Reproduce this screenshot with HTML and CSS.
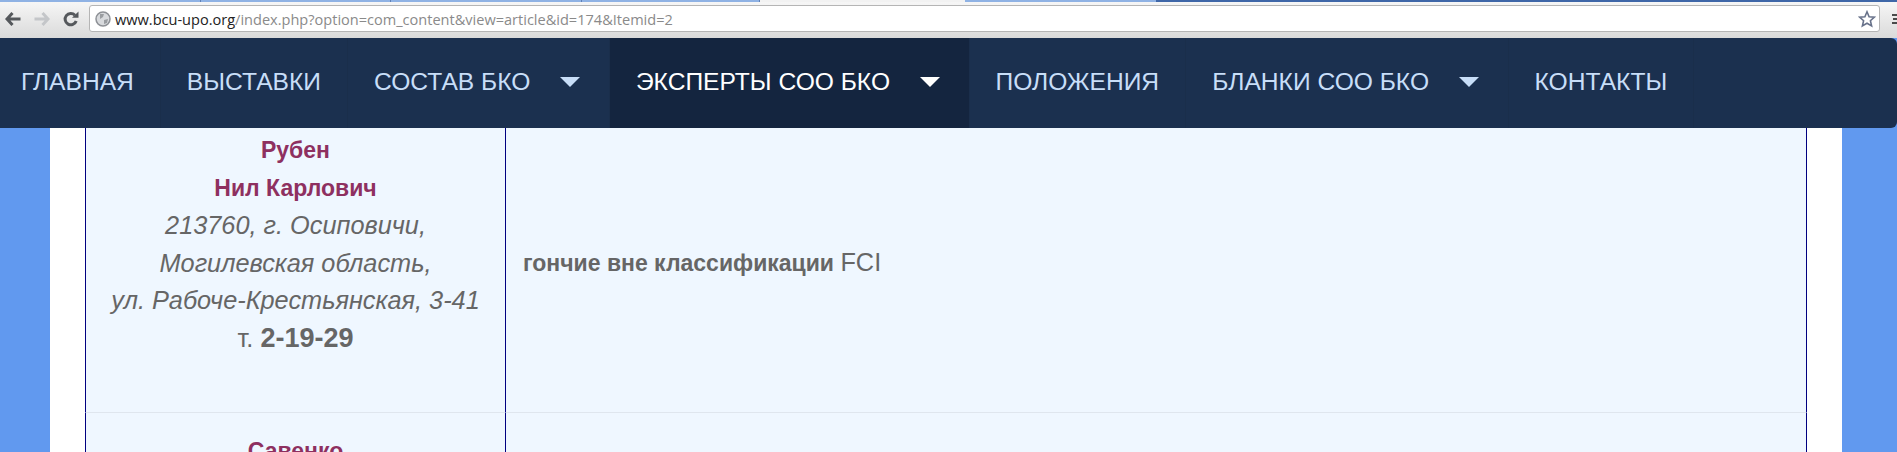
FILE: index.html
```html
<!DOCTYPE html>
<html lang="en">
<head>
  <meta charset="UTF-8">
  <title>БКО</title>
  <link rel="stylesheet" href="styles.css">
</head>
<body>
  <div class="tab-strip">
    <div class="tab tab-a"></div>
    <div class="tab tab-b"></div>
    <div class="tab tab-c"></div>
    <div class="tab tab-d"></div>
    <div class="tab tab-e"></div>
    <div class="tab tab-f"></div>
  </div>
  <div class="toolbar">
    <svg class="tool-icon" width="16" height="14" viewBox="0 0 16 14"><path d="M7.5 1 L2 7 L7.5 13 M3 7 H15.5" fill="none" stroke="#55585c" stroke-width="3"/></svg>
    <svg class="tool-icon" width="16" height="14" viewBox="0 0 16 14"><path d="M8.5 1 L14 7 L8.5 13 M13 7 H0.5" fill="none" stroke="#c4c6c9" stroke-width="3"/></svg>
    <svg class="tool-icon" width="16" height="16" viewBox="0 0 16 16"><path d="M13.2 10 A5.7 5.7 0 1 1 12 4.2" fill="none" stroke="#55585c" stroke-width="3"/><path d="M9 6.8 H15.5 V0.5 Z" fill="#55585c"/></svg>
    <div class="address">
      <svg class="globe" width="16" height="16" viewBox="0 0 16 16"><circle cx="8" cy="8" r="7" fill="#d8dadd" stroke="#8e9196" stroke-width="1.5"/><path d="M5 3 L9 3 L8 6 L5 8 Z M9 9 L13 8 L12 12 L9 13 Z" fill="#9a9da1"/></svg>
      <span class="url"><span class="host">www.bcu-upo.org</span>/index.php?option=com_content&amp;view=article&amp;id=174&amp;Itemid=2</span>
      <svg class="star" width="18" height="18" viewBox="0 0 18 18"><path d="M9 1.8 L11.1 6.7 L16.4 7.2 L12.4 10.7 L13.6 15.9 L9 13.2 L4.4 15.9 L5.6 10.7 L1.6 7.2 L6.9 6.7 Z" fill="#fff" stroke="#68728a" stroke-width="1.6"/></svg>
    </div>
    <svg class="menu-edge" width="5" height="10" viewBox="0 0 5 10"><path d="M0 1 H5 M1 5 H5 M0 9 H5" stroke="#4a4a4a" stroke-width="2"/></svg>
  </div>

  <nav class="nav">
    <a class="nav-item first">ГЛАВНАЯ</a>
    <a class="nav-item">ВЫСТАВКИ</a>
    <a class="nav-item has-sub">СОСТАВ БКО</a>
    <a class="nav-item has-sub active">ЭКСПЕРТЫ СОО БКО</a>
    <a class="nav-item">ПОЛОЖЕНИЯ</a>
    <a class="nav-item has-sub">БЛАНКИ СОО БКО</a>
    <a class="nav-item">КОНТАКТЫ</a>
  </nav>

  <div class="page">
    <table class="experts">
      <tr>
        <td class="person">
          <div class="name">Рубен</div>
          <div class="name">Нил Карлович</div>
          <div class="addr">213760, г. Осиповичи,</div>
          <div class="addr">Могилевская область,</div>
          <div class="addr">ул. Рабоче-Крестьянская, 3-41</div>
          <div class="phone">т. <b>2-19-29</b></div>
        </td>
        <td class="breeds"><b>гончие вне классификации</b> <span class="fci">FCI</span></td>
      </tr>
      <tr>
        <td class="person next">
          <div class="name">Савенко</div>
        </td>
        <td class="breeds"></td>
      </tr>
    </table>
  </div>
</body>
</html>
```

FILE: styles.css
```css
* {
  margin: 0;
  padding: 0;
  box-sizing: border-box;
}

html, body {
  height: 452px;
  overflow: hidden;
}

body {
  background: #6199ef;
  font-family: "Liberation Sans", Arial, sans-serif;
}

.tab-strip {
  height: 2px;
  display: flex;
  background: #f2f2f2;
}

.tab {
  background: #8fb2e4;
  border-right: 1px solid #5f80b5;
}

.tab-a { width: 201px; }
.tab-b { width: 190px; }
.tab-c { width: 191px; }
.tab-d { width: 178px; margin-right: 205px; }
.tab-e { width: 191px; border: 0; }
.tab-f { flex: 1; background: #3f67a8; border: 0; }

.toolbar {
  height: 36px;
  display: flex;
  align-items: center;
  padding: 0 0 3px 5px;
  background: linear-gradient(#f6f6f6, #dadada);
}

.tool-icon {
  margin-right: 13px;
  flex: none;
}

.address {
  width: 1791px;
  height: 27px;
  margin-left: -3px;
  display: flex;
  align-items: center;
  padding: 0 3px 0 5px;
  background: #fff;
  border: 1px solid #b5b5b5;
  border-radius: 3px;
}

.globe {
  margin-right: 4px;
}

.url {
  flex: 1;
  font-family: "Open Sans", sans-serif;
  font-size: 14.55px;
  color: #8a8a8a;
}

.host {
  color: #222;
}

.menu-edge {
  margin-left: 12px;
}

.nav {
  height: 90px;
  display: flex;
  background: #1b304f;
  border-radius: 0 6px 6px 0;
}

.nav-item {
  display: flex;
  align-items: center;
  padding: 0 26px 2px;
  font-size: 24.6px;
  color: #c8def8;
  border-right: 1px solid #1a2e4b;
}

.first {
  padding-left: 21px;
}

.has-sub::after {
  content: '';
  margin: 0 3px 0 29.5px;
  border-left: 10px solid transparent;
  border-right: 10px solid transparent;
  border-top: 10px solid currentColor;
}

.active {
  background: #14253f;
  color: #fff;
}

.page {
  margin: 0 55px 0 50px;
  padding: 0 35px;
  background: #fff;
}

.experts {
  width: 100%;
  border-collapse: separate;
  border-spacing: 0;
  table-layout: fixed;
  background: #eff7ff;
  color: #666;
}

.experts td {
  border-left: 1px solid #000080;
  border-bottom: 1px solid #dfe6ee;
}

.experts .breeds {
  border-right: 1px solid #000080;
  padding: 0 0 16px 17px;
  font-size: 23px;
}

.fci {
  font-size: 25.3px;
}

.person {
  width: 420px;
  height: 285px;
  text-align: center;
  vertical-align: top;
  font-size: 25.3px;
  line-height: 37.5px;
  padding-top: 4px;
}

.next {
  padding-top: 20px;
}

.name {
  font-size: 23px;
  color: #8e3060;
  font-weight: bold;
}

.addr {
  font-style: italic;
}

.phone b {
  font-size: 27px;
}
```
